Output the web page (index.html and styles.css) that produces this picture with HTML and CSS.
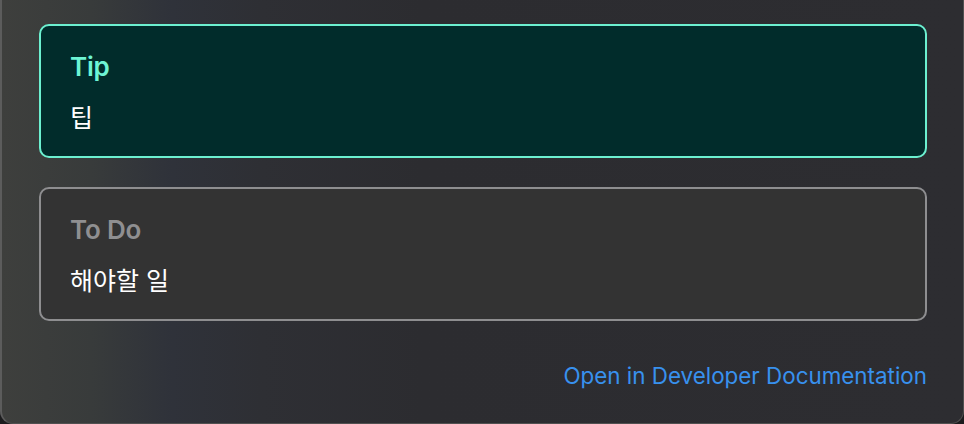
FILE: index.html
```html
<!DOCTYPE html>
<html lang="ko">
<head>
<meta charset="utf-8">
<link rel="stylesheet" href="styles.css">
</head>
<body>
<div class="window">
  <div class="callout tip">
    <div class="callout-title">Tip</div>
    <div class="callout-body">팁</div>
  </div>
  <div class="callout todo">
    <div class="callout-title">To Do</div>
    <div class="callout-body">해야할 일</div>
  </div>
  <div class="footer">
    <a class="doc-link" href="#">Open in Developer Documentation</a>
  </div>
</div>
</body>
</html>
```
FILE: styles.css
```css
html, body {
  margin: 0;
  padding: 0;
  background: #1c1c1e;
  width: 964px;
  height: 424px;
  overflow: hidden;
}
.window {
  box-sizing: border-box;
  width: 964px;
  height: 424px;
  border-left: 2px solid #5c5c5c;
  border-right: 1px solid #505050;
  border-bottom: 1px solid #505050;
  border-radius: 0 0 13px 13px;
  background: linear-gradient(90deg, #3e3f3d 0px, #383b3b 90px, #2f323a 170px, #2e2f34 260px, #2c2c30 420px, #2d2d31 964px);
  padding: 24px 36px 0 37px;
  display: flex;
  flex-direction: column;
  gap: 29px;
  font-family: "Inter", "Noto Sans CJK KR", sans-serif;
}
.callout {
  box-sizing: border-box;
  height: 134px;
  border: 2px solid;
  border-radius: 10px;
  padding: 25px 29px 0 29px;
}
.tip {
  background: #012c2b;
  border-color: #6cf0d0;
}
.todo {
  background: #333333;
  border-color: #8e8e90;
}
.callout-title {
  font-size: 26px;
  font-weight: 600;
  line-height: 32px;
  letter-spacing: -0.2px;
}
.tip .callout-title { color: #6ef4d4; }
.todo .callout-title { color: #8f8f91; }
.callout-body {
  margin-top: 17px;
  font-family: "Noto Sans CJK KR", "Inter", sans-serif;
  font-size: 25px;
  line-height: 32px;
  color: #ffffff;
}
.footer {
  display: flex;
  justify-content: flex-end;
  margin-top: 12px;
}
.doc-link {
  color: #3891ee;
  text-decoration: none;
  font-size: 22.4px;
  line-height: 28px;
}
```
